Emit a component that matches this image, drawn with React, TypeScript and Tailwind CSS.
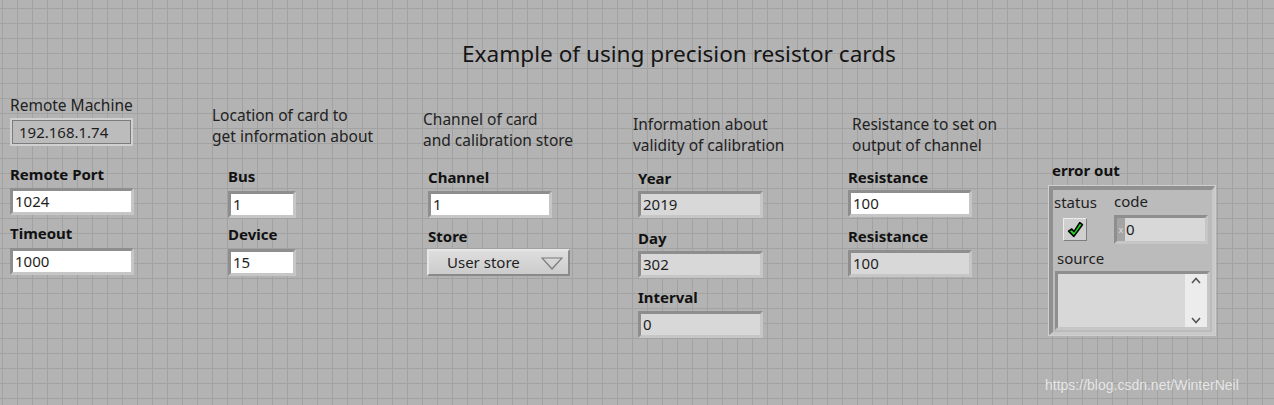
import React from "react";

const font = { fontFamily: '"Noto Sans", "Open Sans", sans-serif' };

// white numeric control or gray indicator with the sunken LabVIEW frame
const Field: React.FC<{ value: string; w: string; indicator?: boolean }> = ({ value, w, indicator }) => (
  <div
    className={`${w} h-[27px] border-[3px] border-t-[#8e8e8e] border-l-[#8e8e8e] border-b-[#c6c6c6] border-r-[#c6c6c6] ${
      indicator ? "bg-[#d8d8d8]" : "bg-white"
    } flex items-center pl-[2px] text-[15px] text-[#1e1e1e] leading-none`}
  >
    {value}
  </div>
);

const Label: React.FC<{ children: React.ReactNode; className?: string }> = ({ children, className = "" }) => (
  <div className={`text-[15px] font-bold text-[#111] leading-[18px] ${className}`}>{children}</div>
);

const Note: React.FC<{ lines: string[]; className?: string }> = ({ lines, className = "" }) => (
  <div className={`text-[15.5px] text-[#222] leading-[21px] ${className}`}>
    {lines.map((l) => (
      <div key={l}>{l}</div>
    ))}
  </div>
);

const Check = () => (
  <svg width="17" height="17" viewBox="0 0 16 16">
    <path
      d="M1.5 9.5 L4.5 7.5 L6.5 10 L12 1.5 L14.5 3.5 L6.5 14.5 Z"
      fill="#22dd22"
      stroke="#000"
      strokeWidth="1.5"
      strokeLinejoin="round"
    />
  </svg>
);

export default function App() {
  return (
    <div
      style={font}
      className="w-[1274px] h-[405px] overflow-hidden relative bg-[#b3b3b3] bg-[linear-gradient(to_right,#a2a2a2_1px,transparent_1px),linear-gradient(to_bottom,#a2a2a2_1px,transparent_1px)] bg-size-[15px_15px] bg-position-[2px_8px]"
    >
      {/* title */}
      <div className="pt-[40px] pl-[462px] text-[22.6px] leading-[28px] text-[#151515]">
        Example of using precision resistor cards
      </div>

      <div className="flex items-start mt-[25px]">
        {/* remote machine */}
        <div className="w-[212px] pl-[10px] pt-[2px]">
          <Note lines={["Remote Machine"]} />
          <div className="w-[123px] h-[28px] mt-[2px] border-2 border-[#d0d0d0] bg-[#bcbcbc]">
            <div className="h-full border border-[#7c7c7c] flex items-center pl-[6px] text-[15px] text-[#1e1e1e]">
              192.168.1.74
            </div>
          </div>
          <Label className="mt-[19px]">Remote Port</Label>
          <div className="mt-[5px]">
            <Field value="1024" w="w-[124px]" />
          </div>
          <Label className="mt-[9px]">Timeout</Label>
          <div className="mt-[6px]">
            <Field value="1000" w="w-[124px]" />
          </div>
        </div>

        {/* card location */}
        <div className="w-[211px] pt-[12px]">
          <Note lines={["Location of card to", "get information about"]} />
          <Label className="mt-[20px] ml-[16px]">Bus</Label>
          <div className="mt-[6px] ml-[16px]">
            <Field value="1" w="w-[68px]" />
          </div>
          <Label className="mt-[7px] ml-[16px]">Device</Label>
          <div className="mt-[6px] ml-[16px]">
            <Field value="15" w="w-[68px]" />
          </div>
        </div>

        {/* channel */}
        <div className="w-[210px] pt-[16px]">
          <Note lines={["Channel of card", "and calibration store"]} />
          <Label className="mt-[17px] ml-[5px]">Channel</Label>
          <div className="mt-[5px] ml-[5px]">
            <Field value="1" w="w-[124px]" />
          </div>
          <Label className="mt-[9px] ml-[5px]">Store</Label>
          <div className="mt-[4px] ml-[4px] w-[143px] h-[27px] border-2 border-t-[#e6e6e6] border-l-[#e6e6e6] border-b-[#8a8a8a] border-r-[#8a8a8a] bg-[linear-gradient(to_bottom,#dedede,#cbcbcb)] flex items-center justify-between pl-[18px] pr-[5px] text-[15px] text-[#1e1e1e]">
            <span>User store</span>
            <svg width="22" height="14" viewBox="0 0 22 14">
              <path d="M1 2 H21 L11 13 Z" fill="none" stroke="#7a7a7a" strokeWidth="1.2" />
            </svg>
          </div>
        </div>

        {/* validity */}
        <div className="w-[215px] pt-[21px]">
          <Note lines={["Information about", "validity of calibration"]} />
          <Label className="mt-[13px] ml-[5px]">Year</Label>
          <div className="mt-[4px] ml-[5px]">
            <Field value="2019" w="w-[125px]" indicator />
          </div>
          <Label className="mt-[11px] ml-[5px]">Day</Label>
          <div className="mt-[4px] ml-[5px]">
            <Field value="302" w="w-[125px]" indicator />
          </div>
          <Label className="mt-[10px] ml-[5px]">Interval</Label>
          <div className="mt-[5px] ml-[5px]">
            <Field value="0" w="w-[125px]" indicator />
          </div>
        </div>

        {/* resistance */}
        <div className="w-[200px] pt-[21px]">
          <Note lines={["Resistance to set on", "output of channel"]} className="ml-[4px]" />
          <Label className="mt-[12px]">Resistance</Label>
          <div className="mt-[4px]">
            <Field value="100" w="w-[124px]" />
          </div>
          <Label className="mt-[10px]">Resistance</Label>
          <div className="mt-[5px]">
            <Field value="100" w="w-[124px]" indicator />
          </div>
        </div>

        {/* error out cluster */}
        <div className="pt-[68px]">
          <Label className="ml-[4px]">error out</Label>
          <div className="mt-[6px] w-[168px] h-[151px] border border-[#cfcfcf] bg-[#bbbbbb]">
            <div className="h-full border-t-[4px] border-l-[4px] border-b-[3px] border-r-[3px] border-t-[#909090] border-l-[#909090] border-b-[#c9c9c9] border-r-[#c9c9c9] pl-[1px] pr-[1px]">
              <div className="flex">
                <div className="w-[60px]">
                  <div className="text-[15px] text-[#1e1e1e] leading-[18px] pt-[3px]">status</div>
                  <div className="mt-[7px] ml-[9px] w-[24px] h-[23px] border border-t-[#ececec] border-l-[#ececec] border-b-[#7e7e7e] border-r-[#7e7e7e] bg-[#cfcfcf] flex items-center justify-center">
                    <Check />
                  </div>
                </div>
                <div>
                  <div className="text-[15px] text-[#1e1e1e] leading-[18px] pt-[2px]">code</div>
                  <div className="mt-[5px] w-[94px] h-[29px] border-[3px] border-t-[#8e8e8e] border-l-[#8e8e8e] border-b-[#c6c6c6] border-r-[#c6c6c6] bg-[#d8d8d8] flex items-center text-[15px] text-[#1e1e1e]">
                    <div className="w-[8px] h-full bg-[#a4a4a4] text-[9px] text-[#dcdcdc] flex items-center justify-center">x</div>
                    <span className="ml-[1px]">0</span>
                  </div>
                </div>
              </div>
              <div className="text-[15px] text-[#1e1e1e] leading-[18px] mt-[5px] ml-[3px]">source</div>
              <div className="mt-[4px] ml-[1px] w-[155px] h-[59px] border-[3px] border-t-[#8e8e8e] border-l-[#8e8e8e] border-b-[#c6c6c6] border-r-[#c6c6c6] bg-[#d8d8d8] flex justify-end">
                <div className="w-[22px] h-full bg-[#ececec] flex flex-col items-center justify-between py-[3px]">
                  <svg width="10" height="7" viewBox="0 0 10 7">
                    <path d="M1 6 L5 1.5 L9 6" fill="none" stroke="#555" strokeWidth="1.6" />
                  </svg>
                  <svg width="10" height="7" viewBox="0 0 10 7">
                    <path d="M1 1 L5 5.5 L9 1" fill="none" stroke="#555" strokeWidth="1.6" />
                  </svg>
                </div>
              </div>
            </div>
          </div>
        </div>
      </div>

      {/* watermark */}
      <div
        className="absolute left-[1045px] top-[375px] text-[14px] text-[#ececec] opacity-90"
        style={{ fontFamily: '"Liberation Sans", Arial, sans-serif' }}
      >
        https://blog.csdn.net/WinterNeil
      </div>
    </div>
  );
}
